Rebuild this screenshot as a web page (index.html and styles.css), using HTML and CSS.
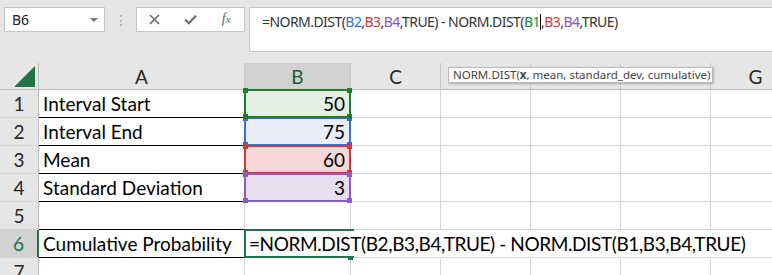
FILE: index.html
```html
<!DOCTYPE html>
<html>
<head>
  <title>NORM.DIST interval</title>
  <link rel="stylesheet" href="styles.css">
</head>
<body>
  <div class="app">
    <div class="toolbar">
      <div class="namebox"><span>B6</span><span class="drop"></span></div>
      <div class="grip"><i></i><i></i><i></i></div>
      <div class="fxbtns">
        <span class="btn"><svg width="11" height="11" viewBox="0 0 11 11"><path d="M1 1L10 10M10 1L1 10" stroke="#6b6b6b" stroke-width="1.6" fill="none"/></svg></span>
        <span class="btn"><svg width="13" height="11" viewBox="0 0 13 11"><path d="M1 5.5L4.8 9.3L12 1.8" stroke="#707070" stroke-width="2.2" fill="none"/></svg></span>
        <span class="btn fx"><i>f</i><sub>x</sub></span>
      </div>
      <div class="formula">=NORM.DIST(<span class="c-blue">B2</span>,<span class="c-red">B3</span>,<span class="c-purple">B4</span>,TRUE) - NORM.DIST(<span class="c-green">B1</span><span class="cursor"></span>,<span class="c-red">B3</span>,<span class="c-purple">B4</span>,TRUE)</div>
    </div>

    <div class="sheet">
      <!-- column headers -->
      <div class="corner"><svg width="21" height="21" viewBox="0 0 21 21"><polygon points="21,0 21,21 0,21" fill="#217346"/></svg></div>
      <div class="ch">A</div>
      <div class="ch ch-on">B</div>
      <div class="ch">C</div>
      <div class="ch"></div>
      <div class="ch"></div>
      <div class="ch"></div>
      <div class="ch">G</div>

      <!-- row 1 -->
      <div class="rh">1</div>
      <div class="cell boxed">Interval Start</div>
      <div class="cell num ref z2"><span class="rng green"><i class="h tl"></i><i class="h tr"></i><i class="h bl"></i><i class="h br"></i></span>50</div>
      <div class="cell"></div><div class="cell"></div><div class="cell"></div><div class="cell"></div><div class="cell"></div>

      <!-- row 2 -->
      <div class="rh">2</div>
      <div class="cell boxed">Interval End</div>
      <div class="cell num ref z1"><span class="rng blue"><i class="h tl"></i><i class="h tr"></i><i class="h bl"></i><i class="h br"></i></span>75</div>
      <div class="cell"></div><div class="cell"></div><div class="cell"></div><div class="cell"></div><div class="cell"></div>

      <!-- row 3 -->
      <div class="rh">3</div>
      <div class="cell boxed">Mean</div>
      <div class="cell num ref z3"><span class="rng red"><i class="h tl"></i><i class="h tr"></i><i class="h bl"></i><i class="h br"></i></span>60</div>
      <div class="cell"></div><div class="cell"></div><div class="cell"></div><div class="cell"></div><div class="cell"></div>

      <!-- row 4 -->
      <div class="rh">4</div>
      <div class="cell boxed">Standard Deviation</div>
      <div class="cell num ref z4"><span class="rng purple"><i class="h tl"></i><i class="h tr"></i><i class="h bl"></i><i class="h br"></i></span>3</div>
      <div class="cell"></div><div class="cell"></div><div class="cell"></div><div class="cell"></div><div class="cell"></div>

      <!-- row 5 -->
      <div class="rh">5</div>
      <div class="cell boxed"></div>
      <div class="cell"></div><div class="cell"></div><div class="cell"></div><div class="cell"></div><div class="cell"></div><div class="cell"></div>

      <!-- row 6 -->
      <div class="rh rh-on">6</div>
      <div class="cell boxed">Cumulative Probability</div>
      <div class="cell editing">=NORM.DIST(B2,B3,B4,TRUE) - NORM.DIST(B1,B3,B4,TRUE)</div>

      <!-- row 7 -->
      <div class="rh">7</div>
      <div class="cell"></div><div class="cell"></div><div class="cell"></div><div class="cell"></div><div class="cell"></div><div class="cell"></div><div class="cell"></div>

      <div class="tip">NORM.DIST(<b>x</b>, mean, standard_dev, cumulative)</div>
    </div>
  </div>
</body>
</html>
```

FILE: styles.css
```css
* {
  box-sizing: border-box;
}
body {
  margin: 0;
  background: #fff;
  font-family: Lato, "Liberation Sans", sans-serif;
}
.app {
  width: 772px;
  height: 275px;
  overflow: hidden;
  background: #e6e6e6;
}

/* formula bar */
.toolbar {
  display: flex;
  align-items: flex-start;
  height: 63px;
  padding: 7px 0 0 4px;
  font-family: "Noto Sans", "Open Sans", sans-serif;
}
.namebox {
  width: 101px;
  height: 25px;
  background: #fff;
  border: 1px solid #c6c6c6;
  display: flex;
  align-items: center;
  justify-content: space-between;
  padding: 0 6px 0 7px;
  font-size: 14px;
  color: #222;
}
.drop {
  border-left: 4px solid transparent;
  border-right: 4px solid transparent;
  border-top: 4px solid #7a7a7a;
}
.grip {
  display: flex;
  flex-direction: column;
  gap: 2.5px;
  margin: 8px 0 0 15px;
}
.grip i {
  width: 2px;
  height: 2px;
  background: #b4b4b4;
}
.fxbtns {
  display: flex;
  width: 109px;
  height: 25px;
  margin-left: 14px;
  background: #fff;
  border: 1px solid #c6c6c6;
}
.btn {
  width: 36px;
  display: flex;
  align-items: center;
  justify-content: center;
}
.fx {
  font-family: "Liberation Serif", serif;
  font-style: italic;
  font-size: 14px;
  color: #666;
  padding-bottom: 2px;
}
.fx sub {
  font-size: 11px;
  vertical-align: -1px;
}
.formula {
  flex: 1;
  height: 45px;
  margin: 0 -6px 0 4px;
  background: #fff;
  border: 1px solid #c6c6c6;
  padding: 4px 0 0 12px;
  font-size: 14px;
  letter-spacing: -0.55px;
  color: #333;
  white-space: nowrap;
}
.c-blue { color: #2f74d0; }
.c-red { color: #d23a3a; }
.c-purple { color: #8a52c4; }
.c-green { color: #1c8a30; }
.cursor {
  display: inline-block;
  width: 1px;
  height: 16px;
  background: #000;
  vertical-align: -3px;
}

/* grid */
.sheet {
  position: relative;
  display: grid;
  grid-template-columns: 39px 206px 106px 90px 90px 90px 90px 90px;
  grid-template-rows: 27px repeat(7, 28px);
  width: max-content;
  background: #fff;
  font-size: 19px;
  color: #000;
}
.sheet > div {
  border-right: 1px solid #d4d4d4;
  border-bottom: 1px solid #d4d4d4;
}
.corner {
  background: #e6e6e6;
  display: flex;
  justify-content: flex-end;
  align-items: flex-end;
  padding: 0 3px 2px 0;
  border-color: #bcbcbc !important;
}
.ch {
  background: #e6e6e6;
  border-right-color: #c8c8c8 !important;
  border-bottom-color: #bcbcbc !important;
  text-align: center;
  line-height: 27px;
  color: #262626;
}
.ch-on {
  background: #d2d2d2;
  color: #1f5a38;
}
.rh {
  background: #e6e6e6;
  border-right-color: #bcbcbc !important;
  text-align: center;
  line-height: 28px;
  color: #262626;
}
.rh-on {
  background: #d2d2d2;
  color: #217346;
  border-right: 2px solid #217346 !important;
}
.cell {
  line-height: 28px;
  padding: 0 4px;
  white-space: nowrap;
}
.boxed {
  border-bottom-color: #000 !important;
}
.num {
  text-align: right;
  padding-right: 5px;
}

/* formula reference ranges */
.ref {
  position: relative;
}
.z1 { z-index: 1; background: #e8edf8; }
.z2 { z-index: 2; background: #e4efe4; }
.z3 { z-index: 3; background: #f6d8d8; }
.z4 { z-index: 4; background: #e5dff0; }
.rng {
  position: absolute;
  inset: -1px;
  border: 2px solid currentColor;
}
.green { color: #1e7d31; }
.blue { color: #3b6fcf; }
.red { color: #cc3a3d; }
.purple { color: #8c5cc4; }
.h {
  position: absolute;
  width: 5px;
  height: 5px;
  background: currentColor;
}
.tl { left: -3px; top: -3px; }
.tr { right: -3px; top: -3px; }
.bl { left: -3px; bottom: -3px; }
.br { right: -3px; bottom: -3px; }

/* cell being edited, text runs over C6:G6 */
.editing {
  grid-column: 3 / -1;
  position: relative;
  background: #fff;
  letter-spacing: -0.4px;
}
.editing::before {
  content: "";
  position: absolute;
  left: -1px;
  top: -1px;
  bottom: -1px;
  width: 108px;
  border: 2px solid #217346;
  border-right: none;
}
.editing::after {
  content: "";
  position: absolute;
  left: 103px;
  bottom: -3px;
  width: 5px;
  height: 4px;
  background: #217346;
}

.tip {
  position: absolute;
  left: 448px;
  top: 4px;
  width: 265px;
  height: 16px;
  background: #fff;
  border: 1px solid #b8b8b8 !important;
  box-shadow: 1px 1px 2px rgba(0, 0, 0, 0.25);
  font-family: "Noto Sans", "Open Sans", sans-serif;
  font-size: 11.5px;
  line-height: 14px;
  padding-left: 4px;
  color: #444;
  white-space: nowrap;
}
```
